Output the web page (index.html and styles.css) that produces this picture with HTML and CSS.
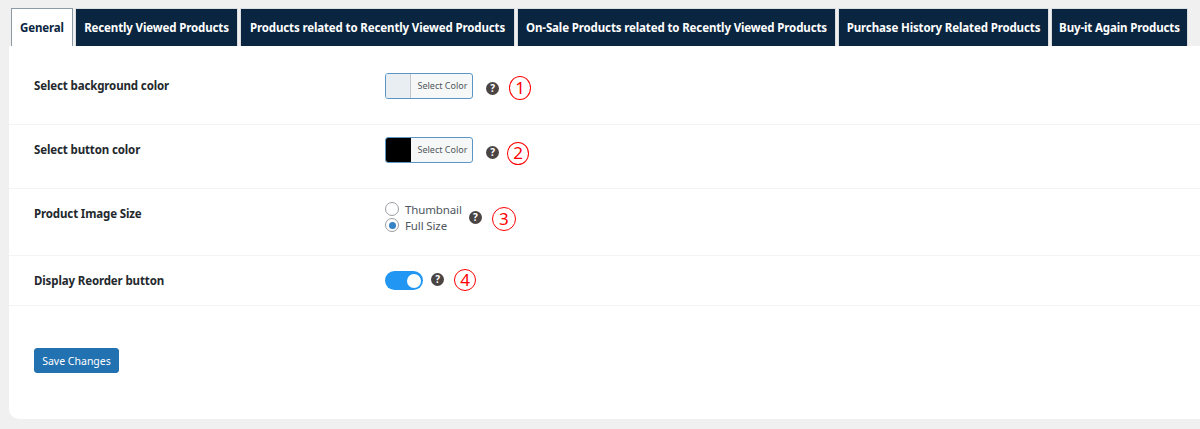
FILE: index.html
```html
<!DOCTYPE html>
<html lang="en">
<head>
    <meta charset="UTF-8">
    <meta name="viewport" content="width=device-width, initial-scale=1.0">
    <title>Settings</title>
    <link rel="stylesheet" href="styles.css">
</head>
<body>
    <div class="tabs">
        <a class="tab active t1">General</a>
        <a class="tab t2">Recently Viewed Products</a>
        <a class="tab t3">Products related to Recently Viewed Products</a>
        <a class="tab t4">On-Sale Products related to Recently Viewed Products</a>
        <a class="tab t5">Purchase History Related Products</a>
        <a class="tab t6">Buy-it Again Products</a>
    </div>
    <div class="panel">
        <div class="row row-1">
            <div class="label">Select background color</div>
            <div class="field">
                <div class="color-picker">
                    <span class="swatch swatch-light"></span>
                    <span class="picker-text">Select Color</span>
                </div>
                <span class="help">?</span>
                <span class="num">1</span>
            </div>
        </div>
        <div class="row row-2">
            <div class="label">Select button color</div>
            <div class="field">
                <div class="color-picker">
                    <span class="swatch swatch-dark"></span>
                    <span class="picker-text">Select Color</span>
                </div>
                <span class="help">?</span>
                <span class="num">2</span>
            </div>
        </div>
        <div class="row row-3">
            <div class="label">Product Image Size</div>
            <div class="field">
                <div class="radios">
                    <div class="radio-line"><span class="radio"></span>Thumbnail</div>
                    <div class="radio-line"><span class="radio checked"></span>Full Size</div>
                </div>
                <span class="help">?</span>
                <span class="num">3</span>
            </div>
        </div>
        <div class="row row-4">
            <div class="label">Display Reorder button</div>
            <div class="field">
                <span class="toggle"><span class="knob"></span></span>
                <span class="help">?</span>
                <span class="num">4</span>
            </div>
        </div>
        <button class="save">Save Changes</button>
    </div>
</body>
</html>
```

FILE: styles.css
```css
html, body {
    height: 100%;
}
body {
    margin: 0;
    padding: 8px 0 0 9px;
    box-sizing: border-box;
    overflow: hidden;
    background-color: #f0f0f1;
    font-family: "Noto Sans", "Open Sans", sans-serif;
    font-size: 11.5px;
    letter-spacing: -0.13px;
    color: #1d2327;
}
.tabs {
    display: flex;
    gap: 2px;
    padding-left: 2px;
    height: 38px;
}
.tab {
    display: flex;
    align-items: center;
    justify-content: center;
    box-sizing: border-box;
    height: 38px;
    background-color: #0a2540;
    border: 1px solid #dcdde0;
    border-bottom: none;
    color: #fff;
    font-weight: 700;
    white-space: nowrap;
}
.tab.active {
    background-color: #fff;
    color: #0a2540;
    border-color: #8c9aa8;
}
.t1 { width: 62px; }
.t2 { width: 163px; }
.t3 { width: 275px; }
.t4 { width: 319px; }
.t5 { width: 211px; }
.t6 { width: 137px; }
.panel {
    width: 1230px;
    height: 373px;
    box-sizing: border-box;
    padding-left: 25px;
    background-color: #fff;
    border-radius: 0 0 0 10px;
}
.row {
    display: flex;
    margin-left: -25px;
    padding-left: 25px;
    border-bottom: 1px solid #f3f4f6;
    box-sizing: border-box;
}
.row-1 { height: 79px; padding-top: 32px; }
.row-2 { height: 64px; padding-top: 17px; }
.row-3 { height: 67px; padding-top: 17px; }
.row-4 { height: 50px; padding-top: 17px; }
.label {
    width: 351px;
    font-weight: 700;
    line-height: 16px;
    color: #23282d;
}
.field {
    display: flex;
    align-items: flex-start;
}
.color-picker {
    display: flex;
    box-sizing: border-box;
    width: 88px;
    height: 26px;
    margin-top: -5px;
    border: 1px solid #5b96c4;
    border-radius: 3px;
    background-color: #f6f7f7;
    overflow: hidden;
}
.swatch {
    box-sizing: border-box;
    width: 25px;
    border-right: 1px solid #c3c4c7;
}
.swatch-light { background-color: #e9eef2; }
.swatch-dark { background-color: #000; border-right-color: #000; }
.picker-text {
    flex: 1;
    padding-left: 2px;
    text-align: center;
    font-size: 9px;
    letter-spacing: 0;
    line-height: 24px;
    color: #50575e;
}
.help {
    display: block;
    width: 13px;
    height: 13px;
    margin-left: 13px;
    border-radius: 50%;
    background-color: #4a4543;
    color: #fff;
    font-size: 10px;
    font-weight: 700;
    line-height: 13px;
    text-align: center;
}
.num {
    display: block;
    box-sizing: border-box;
    width: 22px;
    height: 22px;
    margin-left: 10px;
    border: 1.5px solid #f00;
    border-radius: 50%;
    color: #f00;
    font-size: 17px;
    letter-spacing: 0;
    line-height: 19px;
    text-align: center;
}
.row-1 .help { margin-top: 4px; }
.row-1 .num { height: 24px; margin-top: -2px; line-height: 21px; }
.row-2 .help { margin-top: 4px; }
.row-2 .num { height: 23px; margin-top: 0; margin-left: 8px; line-height: 20px; }
.row-3 .help { margin-top: 5px; margin-left: 7px; }
.row-3 .num { width: 24px; height: 24px; margin-top: 1px; line-height: 21px; }
.row-4 .help { margin-top: 0; margin-left: 8px; }
.row-4 .num { margin-top: -4px; }
.radios {
    margin-top: -5px;
}
.radio-line {
    display: flex;
    align-items: center;
    height: 16px;
    color: #50575e;
}
.radio {
    box-sizing: border-box;
    width: 14px;
    height: 14px;
    margin-right: 6px;
    border: 1px solid #9a9da2;
    border-radius: 50%;
    background-color: #fff;
    display: flex;
    align-items: center;
    justify-content: center;
}
.radio.checked::before {
    content: "";
    width: 7px;
    height: 7px;
    border-radius: 50%;
    background-color: #3582c4;
}
.toggle {
    display: block;
    position: relative;
    width: 38px;
    height: 19px;
    margin-top: -2px;
    border-radius: 10px;
    background-color: #2196f3;
}
.knob {
    position: absolute;
    top: 2.5px;
    right: 2px;
    width: 14px;
    height: 14px;
    border-radius: 50%;
    background-color: #fff;
}
.save {
    display: block;
    margin-top: 42px;
    width: 85px;
    height: 25px;
    padding: 0;
    border: 1px solid #2271b1;
    border-radius: 3px;
    background-color: #2271b1;
    color: #fff;
    font-family: inherit;
    font-size: 10.5px;
    letter-spacing: 0;
}
```
